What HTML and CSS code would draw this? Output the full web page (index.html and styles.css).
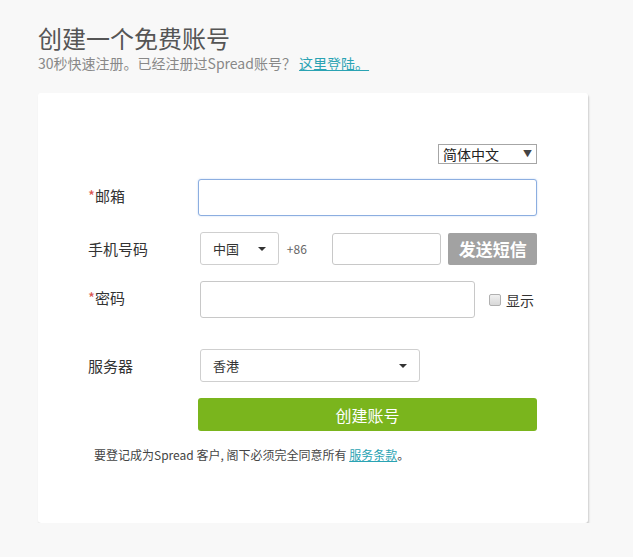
FILE: index.html
```html
<!DOCTYPE html>
<html lang="zh">
<head>
  <meta charset="UTF-8">
  <title>创建一个免费账号 - Spread</title>
  <link rel="stylesheet" href="styles.css">
</head>
<body>

  <div class="header">
    <h1>创建一个免费账号</h1>
    <p class="sub">30秒快速注册。已经注册过Spread账号？ <a href="#">这里登陆。</a></p>
  </div>

  <div class="card">
    <div class="row lang-row">
      <div class="lang">简体中文 <span class="tri-small">▼</span></div>
    </div>

    <div class="row tall">
      <label class="label"><span class="req">*</span>邮箱</label>
      <div class="input email"></div>
    </div>

    <div class="row">
      <label class="label">手机号码</label>
      <div class="select country">中国 <span class="caret"></span></div>
      <span class="code">+86</span>
      <div class="input phone"></div>
      <button class="sms">发送短信</button>
    </div>

    <div class="row tall">
      <label class="label"><span class="req">*</span>密码</label>
      <div class="input pwd"></div>
      <span class="check"></span>
      <span class="show">显示</span>
    </div>

    <div class="row server-row">
      <label class="label">服务器</label>
      <div class="select server">香港 <span class="caret"></span></div>
    </div>

    <div class="row">
      <span class="label"></span>
      <button class="create">创建账号</button>
    </div>

    <p class="terms">要登记成为Spread 客户, 阁下必须完全同意所有 <a href="#">服务条款</a>。</p>
  </div>

</body>
</html>
```

FILE: styles.css
```css
body {
  font-family: "Noto Sans CJK SC", "Open Sans", sans-serif;
  background-color: #f8f8f8;
  margin: 0;
  padding: 0 0 0 38px;
  color: #333;
}

.header {
  padding-top: 23px;
}

h1 {
  margin: 0 0 2px 0;
  font-size: 24px;
  line-height: 29px;
  font-weight: normal;
  color: #555;
}

.sub {
  margin: 0;
  font-size: 14px;
  line-height: 18px;
  color: #888;
}

.sub a {
  color: #2aa3b3;
}

.card {
  box-sizing: border-box;
  width: 550px;
  height: 430px;
  margin-top: 21px;
  padding: 51px 51px 0 50px;
  background-color: white;
  border-radius: 3px;
  box-shadow: 1px 2px 2px rgba(0,0,0,0.18);
}

.row {
  display: flex;
  align-items: center;
  height: 33px;
  margin-bottom: 16px;
}

.row.tall {
  height: 37px;
}

.tall .label {
  padding-bottom: 4px;
}

.lang-row {
  height: 20px;
  margin-bottom: 15px;
  justify-content: flex-end;
}

.server-row {
  margin-top: 31px;
}

.lang {
  box-sizing: border-box;
  width: 99px;
  height: 20px;
  border: 1px solid #a6a6a6;
  padding: 0 4px;
  font-size: 14px;
  line-height: 18px;
  color: #222;
  display: flex;
  justify-content: space-between;
}

.tri-small {
  font-size: 9px;
  color: #444;
}

.label {
  width: 110px;
  flex-shrink: 0;
  font-size: 15px;
  color: #333;
}

.req {
  color: #d9534f;
}

.input {
  box-sizing: border-box;
  height: 100%;
  border: 1px solid #c8c8c8;
  border-radius: 3px;
  background: white;
}

.email {
  width: 340px;
  border-color: #8caee0;
  box-shadow: 0 0 2px rgba(102,155,230,0.4);
}

.select {
  box-sizing: border-box;
  height: 100%;
  margin-left: 2px;
  border: 1px solid #cfcfcf;
  border-radius: 3px;
  padding: 0 12px;
  font-size: 13px;
  color: #333;
  display: flex;
  align-items: center;
  justify-content: space-between;
}

.caret {
  width: 0;
  height: 0;
  border-left: 4px solid transparent;
  border-right: 4px solid transparent;
  border-top: 4px solid #333;
}

.country {
  width: 79px;
}

.code {
  width: 45px;
  margin-left: 8px;
  font-size: 12px;
  color: #666;
}

.phone {
  width: 110px;
  height: 32px;
}

.sms {
  width: 89px;
  height: 32px;
  margin-left: 7px;
  border: none;
  border-radius: 2px;
  background-color: #a2a2a2;
  color: white;
  font-family: inherit;
  font-size: 17px;
  font-weight: bold;
  padding: 0;
}

.pwd {
  width: 275px;
  margin-left: 2px;
}

.check {
  width: 10px;
  height: 10px;
  margin-left: 14px;
  border: 1px solid #b0b0b0;
  border-radius: 2px;
  background: linear-gradient(#f0f0f0, #d8d8d8);
}

.show {
  margin-left: 5px;
  font-size: 14px;
  color: #333;
}

.server {
  width: 220px;
}

.create {
  width: 340px;
  height: 33px;
  border: none;
  border-radius: 3px;
  background-color: #7ab51d;
  color: white;
  font-family: inherit;
  font-size: 16px;
  padding: 0;
}

.terms {
  margin: 0;
  padding-left: 6px;
  font-size: 12px;
  line-height: 16px;
  color: #444;
}

.terms a {
  color: #2aa3b3;
}
```
